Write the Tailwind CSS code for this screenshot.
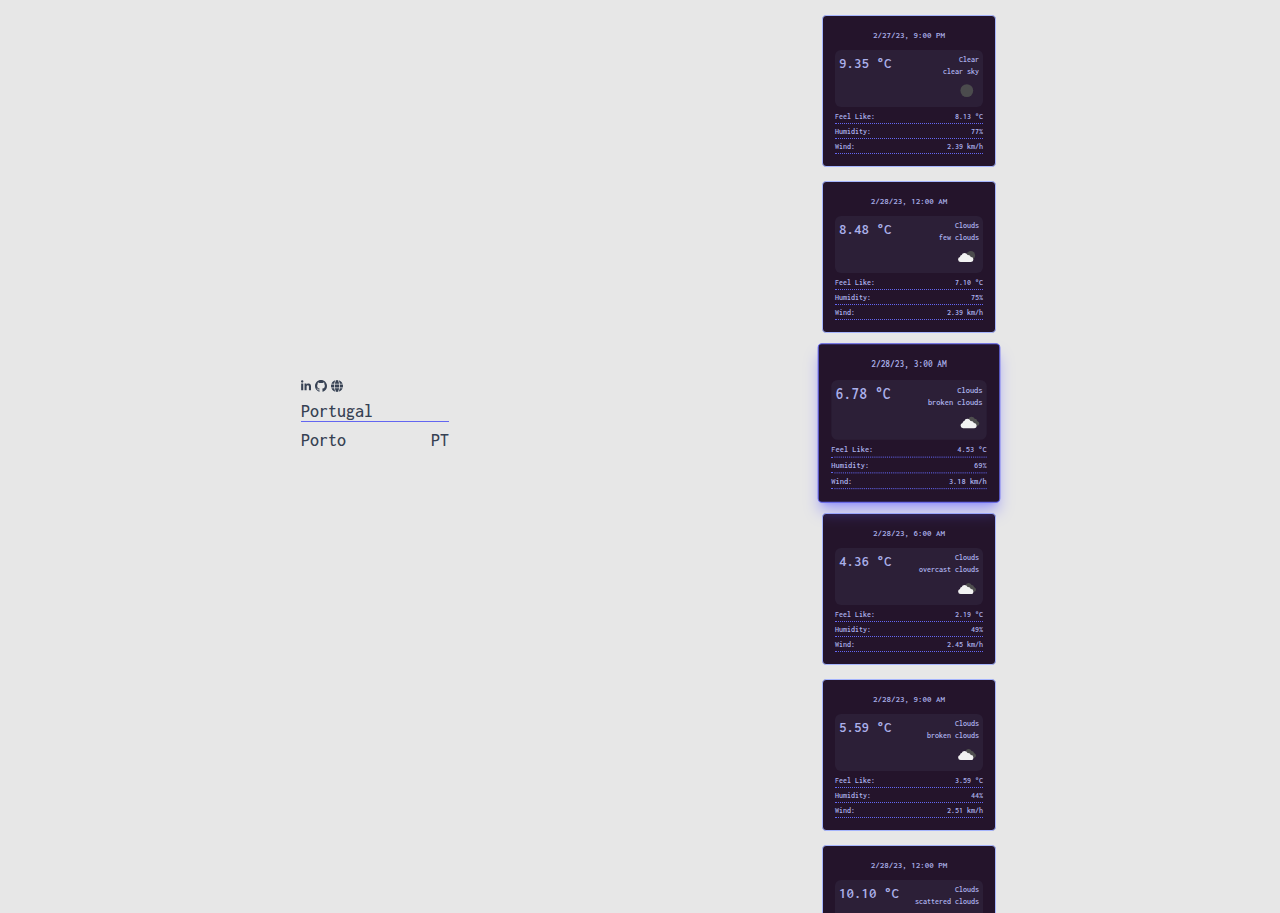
<!DOCTYPE html>
<html lang="en">
<head>
<meta charset="utf-8">
<meta name="viewport" content="width=device-width, initial-scale=1">
<title>Weather forecast</title>
<script src="https://cdn.jsdelivr.net/npm/@tailwindcss/browser@4"></script>
</head>
<body class="bg-[#e7e7e7] font-['Inconsolata','Noto_Sans_Mono_CJK_SC','Liberation_Mono',monospace] font-medium">
<main class="grid h-screen grid-cols-2 pr-[104px] pl-[108px]">
  <section class="flex flex-col items-center justify-center pb-[82px] text-gray-700">
    <div class="w-[148px]">
      <nav class="flex gap-1" aria-label="Links">
        <a href="#linkedin" aria-label="LinkedIn"><svg class="h-3 w-[10px]" viewBox="0 0 448 512" fill="currentColor"><path d="M100.28 448H7.4V148.9h92.88zM53.79 108.1C24.09 108.1 0 83.5 0 53.8a53.79 53.79 0 0 1 107.58 0c0 29.7-24.1 54.3-53.79 54.3zM447.9 448h-92.68V302.4c0-34.7-.7-79.2-48.29-79.2-48.29 0-55.69 37.7-55.69 76.7V448h-92.78V148.9h89.08v40.8h1.3c12.4-23.5 42.69-48.3 87.88-48.3 94 0 111.28 61.9 111.28 142.3V448z"/></svg></a>
        <a href="#github" aria-label="GitHub"><svg class="size-3" viewBox="0 0 16 16" fill="currentColor"><path d="M8 0C3.58 0 0 3.58 0 8c0 3.54 2.29 6.53 5.47 7.59.4.07.55-.17.55-.38 0-.19-.01-.82-.01-1.49-2.01.37-2.53-.49-2.69-.94-.09-.23-.48-.94-.82-1.13-.28-.15-.68-.52-.01-.53.63-.01 1.08.58 1.23.82.72 1.21 1.87.87 2.33.66.07-.52.28-.87.51-1.07-1.78-.2-3.64-.89-3.64-3.95 0-.87.31-1.59.82-2.15-.08-.2-.36-1.02.08-2.12 0 0 .67-.21 2.2.82a7.6 7.6 0 0 1 4 0c1.53-1.04 2.2-.82 2.2-.82.44 1.1.16 1.92.08 2.12.51.56.82 1.27.82 2.15 0 3.07-1.87 3.75-3.65 3.95.29.25.54.73.54 1.48 0 1.07-.01 1.93-.01 2.2 0 .21.15.46.55.38A8.01 8.01 0 0 0 16 8c0-4.42-3.58-8-8-8z"/></svg></a>
        <a href="#website" aria-label="Website"><svg class="size-3" viewBox="0 0 512 512" fill="currentColor"><path d="M352 256c0 22.200-1.200 43.600-3.300 64H163.300c-2.200-20.400-3.300-41.800-3.300-64s1.200-43.600 3.300-64h185.400c2.200 20.400 3.300 41.800 3.300 64zm28.800-64h123.100c5.300 20.500 8.100 41.900 8.100 64s-2.800 43.500-8.100 64H380.800c2.100-20.600 3.200-42 3.200-64s-1.100-43.400-3.200-64zm112.600-32H376.700c-10-63.900-29.800-117.400-55.300-151.600 78.300 20.700 142 77.500 172 151.600zm-149.100 0H167.700c6.100-36.400 15.500-68.600 27-94.700 10.500-23.600 22.200-40.700 33.500-51.500C239.400 3.200 248.700 0 256 0s16.600 3.200 27.800 13.800c11.300 10.800 23 27.900 33.500 51.500 11.600 26 20.900 58.200 27 94.700zm-209 0H18.600C48.600 85.900 112.200 29.100 190.600 8.400 165.100 42.600 145.300 96.100 135.300 160zM8.100 192h123.100c-2.100 20.600-3.200 42-3.200 64s1.100 43.400 3.200 64H8.100C2.800 299.500 0 278.100 0 256s2.800-43.500 8.100-64zm186.600 254.600c-11.600-26-20.900-58.200-27-94.600h176.600c-6.100 36.400-15.500 68.600-27 94.600-10.500 23.600-22.200 40.700-33.500 51.500C272.600 508.800 263.300 512 256 512s-16.600-3.200-27.800-13.800c-11.300-10.800-23-27.900-33.500-51.600zM135.300 352c10 63.900 29.800 117.400 55.300 151.600C112.200 482.900 48.600 426.100 18.600 352h116.700zm358.100 0c-30 74.100-93.600 130.900-171.900 151.600 25.500-34.200 45.200-87.700 55.300-151.600h116.600z"/></svg></a>
      </nav>
      <h1 class="mt-[10px] border-b border-[#6366f1] text-[18px] leading-[19px]">Portugal</h1>
      <p class="mt-2 flex justify-between text-[18px] leading-[21px]"><span>Porto</span><span>PT</span></p>
    </div>
  </section>
  <section id="forecast" aria-label="Forecast" class="flex h-screen flex-col items-center gap-[14px] overflow-y-auto py-[15px] font-semibold [scrollbar-width:none]"></section>
</main>

<template id="card">
  <article class="w-[174px] shrink-0 rounded border border-[#a5b4fc] bg-[#24142b] p-3 text-[8px] text-[#abb0ea]">
    <h2 data-f="time" class="text-center text-[9px] leading-[14px]"></h2>
    <div class="mt-2 flex justify-between rounded-md bg-[#2c1f37] p-1">
      <p data-f="temp" class="text-[15px] leading-[18px]"></p>
      <div class="flex flex-col items-end text-right leading-3">
        <p data-f="main"></p>
        <p data-f="desc"></p>
        <svg data-f="icon" class="h-[25px] w-6" viewBox="0 0 24 25"></svg>
      </div>
    </div>
    <dl class="mt-[2px] leading-3">
      <div class="flex justify-between border-b border-dotted border-[#6366f1] pt-[2px]"><dt>Feel Like:</dt><dd data-f="feel"></dd></div>
      <div class="flex justify-between border-b border-dotted border-[#6366f1] pt-[2px]"><dt>Humidity:</dt><dd data-f="hum"></dd></div>
      <div class="flex justify-between border-b border-dotted border-[#6366f1] pt-[2px]"><dt>Wind:</dt><dd data-f="wind"></dd></div>
    </dl>
  </article>
</template>
<script>
  const cloud = '<path fill="#f2f2f2" d="M5.600 18A2.600 2.600 0 0 1 5 12.900Q5.200 11.300 6.700 11.100Q7.300 9 9.500 9Q11.700 9 12.600 11Q15.200 10.800 15.800 13A2.500 2.500 0 0 1 16 18Z"/>';
  const icons = {
    clear: '<circle cx="11.800" cy="12.600" r="6.400" fill="#4b4b4d"/>',
    few: '<circle cx="15.800" cy="11.400" r="4.300" fill="#4b4b4d"/>' + cloud,
    broken: '<path fill="#4f4f4f" d="M10.500 9Q11.500 7 13.500 7Q15.600 7 16.600 8.900Q18.700 9 19 11Q21.200 12 21 13.900Q20.700 15.800 18.200 15.800L12 14Z"/>' + cloud
  };
  const data = [
    ['2/27/23, 9:00 PM', '9.35', 'Clear', 'clear sky', 'clear', '8.13', 77, '2.39'],
    ['2/28/23, 12:00 AM', '8.48', 'Clouds', 'few clouds', 'few', '7.10', 75, '2.39'],
    ['2/28/23, 3:00 AM', '6.78', 'Clouds', 'broken clouds', 'broken', '4.53', 69, '3.18'],
    ['2/28/23, 6:00 AM', '4.36', 'Clouds', 'overcast clouds', 'broken', '2.19', 49, '2.45'],
    ['2/28/23, 9:00 AM', '5.59', 'Clouds', 'broken clouds', 'broken', '3.59', 44, '2.51'],
    ['2/28/23, 12:00 PM', '10.10', 'Clouds', 'scattered clouds', 'few', '8.70', 36, '2.60']
  ];
  const list = document.getElementById('forecast');
  data.forEach(([time, temp, main, desc, icon, feel, hum, wind], i) => {
    const card = document.getElementById('card').content.cloneNode(true).firstElementChild;
    const values = { time, temp: temp + ' °C', main, desc, feel: feel + ' °C', hum: hum + '%', wind: wind + ' km/h' };
    for (const k in values) card.querySelector(`[data-f=${k}]`).textContent = values[k];
    card.querySelector('[data-f=icon]').innerHTML = icons[icon];
    // The active card is enlarged and glows over its neighbours
    if (i === 2) {
      card.classList.remove('border-[#a5b4fc]');
      card.classList.add('z-10', 'scale-105', 'border-[#6366f1]', 'shadow-lg', 'shadow-indigo-500/50');
    }
    list.append(card);
  });
</script>
</body>
</html>
